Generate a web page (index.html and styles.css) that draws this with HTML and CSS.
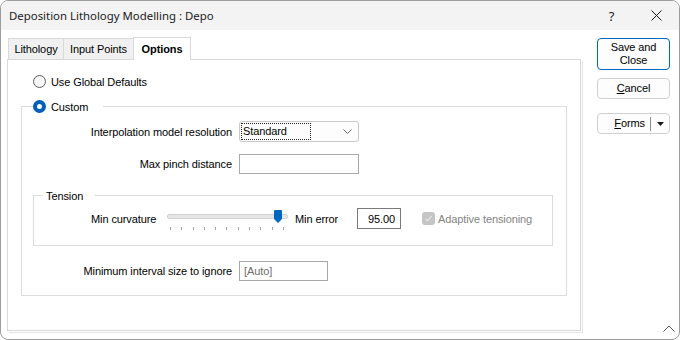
FILE: index.html
```html
<!DOCTYPE html>
<html lang="en">
<head>
  <meta charset="UTF-8" />
  <title>Deposition Lithology Modelling</title>
  <link rel="stylesheet" href="styles.css">
</head>
<body>
  <div class="window">
    <div class="titlebar">
      <span class="title">Deposition Lithology Modelling : Depo</span>
      <span class="cap-btn help">?</span>
      <span class="cap-btn">
        <svg width="11" height="11" viewBox="0 0 11 11"><path d="M0.5 0.5 L10.5 10.5 M10.5 0.5 L0.5 10.5" stroke="#1a1a1a" stroke-width="1" fill="none"/></svg>
      </span>
    </div>

    <div class="body">
      <div class="tabs-area">
        <div class="tabstrip">
          <div class="tab t1">Lithology</div>
          <div class="tab t2">Input Points</div>
          <div class="tab t3 active">Options</div>
        </div>

        <div class="tabpanel">
          <div class="radio-row">
            <span class="radio"></span>Use Global Defaults
          </div>

          <fieldset class="group custom">
            <legend><span class="radio checked"></span>Custom</legend>

            <div class="field">
              <span class="label">Interpolation model resolution</span>
              <div class="combo">
                <span class="focus">Standard</span>
                <svg class="chev" width="9" height="5" viewBox="0 0 9 5"><path d="M0.5 0.5 L4.5 4.5 L8.5 0.5" stroke="#6a6a6a" fill="none"/></svg>
              </div>
            </div>

            <div class="field gap">
              <span class="label">Max pinch distance</span>
              <div class="input w-pinch"></div>
            </div>

            <fieldset class="group tension">
              <legend>Tension</legend>
              <div class="tension-row">
                <span class="t-label">Min curvature</span>
                <div class="slider">
                  <div class="track">
                    <svg class="thumb" width="8" height="13" viewBox="0 0 8 13"><path d="M1 0 H7 Q8 0 8 1 V9 L4 13 L0 9 V1 Q0 0 1 0 Z" fill="#0067c0"/></svg>
                  </div>
                  <div class="ticks">
                    <i></i><i></i><i></i><i></i><i></i><i></i><i></i><i></i><i></i><i></i><i></i>
                  </div>
                </div>
                <span class="t-err">Min error</span>
                <div class="input w-err num">95.00</div>
                <span class="check">
                  <svg width="13" height="13" viewBox="0 0 13 13"><rect x="0" y="0" width="13" height="13" rx="3" fill="#c5c5c5"/><path d="M3.5 6.8 L5.6 8.8 L9.6 4.2" stroke="#e6e6e6" stroke-width="1.2" fill="none"/></svg>
                </span>
                <span class="disabled">Adaptive tensioning</span>
              </div>
            </fieldset>

            <div class="field interval">
              <span class="label">Minimum interval size to ignore</span>
              <div class="input w-int muted">[Auto]</div>
            </div>
          </fieldset>
        </div>
      </div>

      <div class="buttons">
        <div class="btn default">Save and<br>Close</div>
        <div class="btn cancel"><u>C</u>ancel</div>
        <div class="btn forms">
          <span class="forms-text"><u>F</u>orms</span>
          <span class="sep"></span>
          <svg width="7" height="4" viewBox="0 0 7 4"><path d="M0 0 H7 L3.5 4 Z" fill="#1a1a1a"/></svg>
        </div>
      </div>
    </div>

    <svg class="grip" width="12" height="7" viewBox="0 0 12 7"><path d="M0.5 6.5 L6 1 L11.5 6.5" stroke="#555" fill="none"/></svg>
  </div>
</body>
</html>
```

FILE: styles.css
```css
* {
  box-sizing: border-box;
}
body {
  margin: 0;
  background: #fff;
  font-family: "Liberation Sans", Arial, sans-serif;
  font-size: 11px;
  letter-spacing: -0.1px;
  color: #000;
}
.window {
  position: relative;
  width: 680px;
  height: 340px;
  border: 1px solid #9c9c9c;
  border-radius: 8px;
  overflow: hidden;
  background: #fff;
  display: flex;
  flex-direction: column;
}
.titlebar {
  height: 29px;
  flex: none;
  background: #f3f3f3;
  display: flex;
  align-items: center;
  padding-left: 8px;
  font-family: "Noto Sans", sans-serif;
  font-size: 11.4px;
  letter-spacing: 0;
  color: #1a1a1a;
}
.title {
  flex: 1;
}
.cap-btn {
  width: 45px;
  height: 29px;
  display: flex;
  align-items: center;
  justify-content: center;
}
.help {
  font-size: 13px;
}

.body {
  flex: 1;
  display: flex;
  padding: 7px 0 0 6px;
}
.tabs-area {
  width: 574px;
}
.tabstrip {
  display: flex;
  align-items: flex-end;
  height: 22px;
  padding-left: 1px;
}
.tab {
  height: 21px;
  background: #f0f0f0;
  border: 1px solid #d9d9d9;
  border-bottom: none;
  margin-right: -1px;
  display: flex;
  align-items: center;
  justify-content: center;
}
.t1 { width: 56px; }
.t2 { width: 71px; }
.t3 { width: 58px; }
.tab.active {
  height: 23px;
  margin-bottom: -1px;
  background: #fff;
  font-weight: bold;
  position: relative;
  z-index: 1;
}
.tabpanel {
  height: 272px;
  border: 1px solid #d9d9d9;
  background: #fff;
  box-shadow: 1px 1px 0 #fff, 2px 2px 0 #e4e4e4;
  padding-top: 14px;
}

.radio-row {
  display: flex;
  align-items: center;
  height: 15px;
  padding-left: 25px;
}
.radio {
  width: 13px;
  height: 13px;
  border-radius: 50%;
  border: 1px solid #5d5d5d;
  background: #f6f6f6;
  margin-right: 5px;
  flex: none;
}
.radio.checked {
  border: 4px solid #005fb8;
  background: #fff;
}

.group {
  margin: 0;
  padding: 0;
  border: 1px solid #dcdcdc;
  min-width: 0;
}
.group legend {
  display: flex;
  align-items: center;
  height: 15px;
  padding: 0;
}
.custom {
  margin: 10px 13px 0 13px;
  padding: 7px 0 14px 0;
}
.custom legend {
  margin-left: 11px;
  padding-right: 15px;
}

.field {
  display: flex;
  align-items: center;
}
.field.gap {
  margin-top: 12px;
}
.label {
  width: 210px;
  text-align: right;
  margin-right: 7px;
}
.combo {
  width: 120px;
  height: 21px;
  border: 1px solid #c9c9c9;
  border-radius: 3px;
  background: #fdfdfd;
  display: flex;
  align-items: center;
  padding-left: 1px;
}
.focus {
  width: 70px;
  height: 17px;
  border: 1px dotted #222;
  padding-left: 1px;
  line-height: 15px;
}
.chev {
  margin-left: auto;
  margin-right: 6px;
}
.input {
  height: 20px;
  border: 1px solid #a8a8a8;
  background: #fff;
  display: flex;
  align-items: center;
  padding: 0 4px;
}
.w-pinch { width: 120px; }
.w-int { width: 89px; }
.w-err {
  width: 44px;
  height: 21px;
  border-color: #7a7a7a;
  justify-content: flex-end;
  padding-right: 5px;
}
.muted { color: #6d6d6d; }

.tension {
  margin: 14px 13px 0 11px;
  padding: 5px 0 16px 0;
}
.tension legend {
  margin-left: 9px;
  padding-left: 3px;
  padding-right: 12px;
}
.tension-row {
  display: flex;
  align-items: center;
  height: 21px;
  padding-left: 57px;
}
.t-label {
  width: 76px;
}
.slider {
  width: 121px;
  height: 21px;
  padding-top: 6px;
}
.track {
  position: relative;
  height: 5px;
  background: #e6e6e6;
  border: 1px solid #d3d3d3;
  border-radius: 2px;
}
.thumb {
  position: absolute;
  left: 106px;
  top: -5px;
}
.ticks {
  display: flex;
  justify-content: space-between;
  margin: 8px 4px 0 3px;
}
.ticks i {
  width: 1px;
  height: 3px;
  background: #a6a6a6;
}
.t-err {
  width: 69px;
  padding-left: 7px;
}
.check {
  margin-left: 21px;
  margin-right: 3px;
  display: flex;
}
.disabled {
  color: #838383;
}

.interval {
  margin-top: 15px;
}

.buttons {
  margin-left: 16px;
  width: 73px;
  display: flex;
  flex-direction: column;
  padding-top: 1px;
}
.btn {
  width: 73px;
  height: 21px;
  border: 1px solid #d0d0d0;
  border-radius: 4px;
  background: #fdfdfd;
  display: flex;
  align-items: center;
  justify-content: center;
  text-align: center;
  line-height: 13px;
}
.btn.default {
  height: 32px;
  border-color: #0067c0;
}
.btn.cancel {
  margin-top: 8px;
}
.btn.forms {
  margin-top: 14px;
  justify-content: flex-end;
  padding-right: 5px;
}
.sep {
  width: 1px;
  height: 14px;
  background: #8a8a8a;
  margin: 0 6px 0 5px;
}

.grip {
  position: absolute;
  right: 4px;
  bottom: 7px;
}
```
